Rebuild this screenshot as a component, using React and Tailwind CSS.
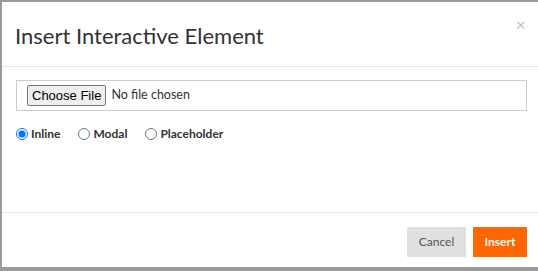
import React, { useState } from 'react';

const lato = { fontFamily: 'Lato, "Open Sans", sans-serif' };

const App = () => {
  const [mode, setMode] = useState('inline');

  const options = [
    { value: 'inline', label: 'Inline' },
    { value: 'modal', label: 'Modal' },
    { value: 'placeholder', label: 'Placeholder' },
  ];

  return (
    <div className="h-[271px] w-[538px] overflow-hidden bg-[#9a9a9a] pl-[2px] pt-[2px]" style={lato}>
      <div className="flex h-[265px] w-[540px] flex-col bg-white">
        <div className="flex h-[65px] items-start justify-between border-b border-[#e5e5e5] pl-[13px] pr-[16px]">
          <h4 className="pt-[20px] text-[22px] leading-[28px] text-[#333333]">Insert Interactive Element</h4>
          <button type="button" className="pt-[12px] text-[18px] leading-[20px] text-[#c4c4c4]">
            ×
          </button>
        </div>

        <div className="flex-1 px-[14px] pt-[13px]">
          <div className="flex h-[31px] w-[511px] items-center border border-[#cccccc] pl-[10px]">
            <span
              className="flex h-[21px] items-center rounded-[2px] border border-[#767676] bg-[#efefef] px-[4px] text-[13px] text-black"
              style={{ fontFamily: '"Liberation Sans", Arial, sans-serif' }}
            >
              Choose File
            </span>
            <span className="ml-[5px] text-[12.5px] text-[#333333]">No file chosen</span>
          </div>

          <div className="mt-[14px] flex items-center gap-[18px] text-[12px] font-bold text-[#333333]">
            {options.map((opt) => (
              <label key={opt.value} className="flex items-center gap-[3px]">
                <input
                  type="radio"
                  name="mode"
                  value={opt.value}
                  checked={mode === opt.value}
                  onChange={() => setMode(opt.value)}
                  className="m-0 h-[12px] w-[12px]"
                />
                {opt.label}
              </label>
            ))}
          </div>
        </div>

        <div className="flex h-[55px] items-start justify-end gap-[7px] border-t border-[#e5e5e5] pr-[15px] pt-[14px]">
          <button type="button" className="h-[30px] w-[59px] bg-[#e0e0e0] text-[12px] text-[#555555]">
            Cancel
          </button>
          <button type="button" className="h-[30px] w-[54px] bg-[#ff6600] text-[12px] font-bold text-white">
            Insert
          </button>
        </div>
      </div>
    </div>
  );
};

export default App;
